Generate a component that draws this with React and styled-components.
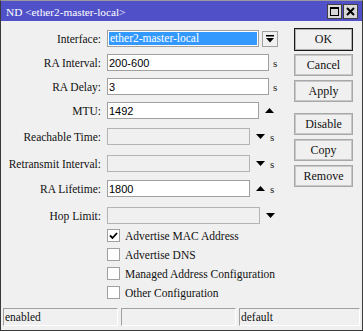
import React from 'react';
import styled, { createGlobalStyle } from 'styled-components';

const Global = createGlobalStyle`
  html, body { margin: 0; padding: 0; background: #f0f0f0; }
  body { font-family: "Liberation Serif", serif; }
`;

const Window = styled.div`
  box-sizing: border-box;
  width: 363px;
  height: 331px;
  display: flex;
  flex-direction: column;
  background: #f0f0f0;
  border: 1px solid #3a3a3a;
  border-top-color: #9a9a9a;
  overflow: hidden;
`;

const TitleBar = styled.div`
  height: 20px;
  flex: none;
  display: flex;
  align-items: center;
  background: #5050c8;
  color: #fff;
  padding-left: 5px;
  padding-right: 4px;
  font-size: 11.3px;
`;

const Title = styled.div`
  flex: 1;
  padding-top: 1px;
`;

const TitleButton = styled.div`
  box-sizing: border-box;
  width: 15px;
  height: 15px;
  margin-left: 1px;
  background: #d8d8d8;
  border: 1px solid #404040;
  display: flex;
  align-items: center;
  justify-content: center;
`;

const Content = styled.div`
  flex: 1;
  display: flex;
  padding-top: 7px;
`;

const Form = styled.div`
  flex: 1;
  display: flex;
  flex-direction: column;
`;

const Row = styled.div`
  display: flex;
  align-items: center;
  height: 17px;
  margin-top: ${p => p.$top}px;
`;

const Label = styled.div`
  width: 100px;
  text-align: right;
  font-size: 11.5px;
  color: #111;
  white-space: nowrap;
`;

const Field = styled.div`
  box-sizing: border-box;
  width: ${p => p.$w}px;
  height: 17px;
  margin-left: 6px;
  border: 1px solid ${p => (p.$off ? '#b4b4b4' : '#a0a0a0')};
  background: ${p => (p.$off ? '#f0f0f0' : '#fff')};
  display: flex;
  align-items: center;
  padding: 0 1px;
  font-family: "Liberation Sans", Arial, sans-serif;
  font-size: 11px;
  color: #000;
`;

const Selected = styled.span`
  display: block;
  width: 100%;
  height: 13px;
  line-height: 13px;
  background: #3399ff;
  color: #fff;
  font-family: "Liberation Serif", serif;
  font-size: 11.5px;
  padding-left: 1px;
`;

const DropButton = styled.div`
  box-sizing: border-box;
  width: 16px;
  height: 16px;
  margin-left: 3px;
  border: 1px solid #a0a0a0;
  background: #f0f0f0;
  display: flex;
  align-items: center;
  justify-content: center;
`;

const Arrow = styled.div`
  width: 9px;
  height: 9px;
  margin-left: 6px;
  display: flex;
  align-items: center;
  justify-content: center;
`;

const Unit = styled.span`
  margin-left: ${p => p.$gap}px;
  font-size: 11px;
  color: #222;
`;

const Checks = styled.div`
  display: flex;
  flex-direction: column;
  gap: 6px;
  margin-top: 5px;
  padding-left: 106px;
`;

const CheckRow = styled.label`
  display: flex;
  align-items: center;
  height: 13px;
  font-size: 11.5px;
  color: #111;
`;

const Box = styled.span`
  box-sizing: border-box;
  width: 13px;
  height: 13px;
  border: 1px solid #a0a0a0;
  background: #fff;
  margin-right: 5px;
  display: flex;
  align-items: center;
  justify-content: center;
`;

const Buttons = styled.div`
  width: 59px;
  margin-right: 9px;
  display: flex;
  flex-direction: column;
`;

const Button = styled.div`
  box-sizing: border-box;
  height: ${p => (p.$default ? 23 : 22)}px;
  margin-top: ${p => p.$top}px;
  border: 1px solid ${p => (p.$default ? '#1a1a1a' : '#a8a8a8')};
  box-shadow: inset 0 0 0 1px ${p => (p.$default ? '#b0b0b0' : '#c8c8c8')};
  background: #f0f0f0;
  display: flex;
  align-items: center;
  justify-content: center;
  font-size: 12px;
  color: #111;
`;

const StatusBar = styled.div`
  display: flex;
  gap: 3px;
  padding: 0 2px 4px 2px;
  height: 18px;
  flex: none;
`;

const Cell = styled.div`
  box-sizing: border-box;
  width: ${p => p.$w}px;
  flex: ${p => (p.$grow ? 1 : 'none')};
  height: 18px;
  border: 1px solid #fff;
  border-top-color: #a0a0a0;
  border-left-color: #a0a0a0;
  padding-left: 1px;
  display: flex;
  align-items: center;
  font-size: 11.5px;
  color: #111;
`;

const Up = () => (
  <svg width="9" height="5" viewBox="0 0 9 5"><path d="M0 5 L4.5 0 L9 5 Z" fill="#000" /></svg>
);
const Down = () => (
  <svg width="9" height="5" viewBox="0 0 9 5"><path d="M0 0 L9 0 L4.5 5 Z" fill="#000" /></svg>
);

const rows = [
  { label: 'RA Interval:', value: '200-600', w: 162, unit: true, top: 7 },
  { label: 'RA Delay:', value: '3', w: 162, unit: true, top: 7 },
  { label: 'MTU:', value: '1492', w: 152, arrow: 'up', top: 7 },
  { label: 'Reachable Time:', w: 143, off: true, arrow: 'down', unit: true, top: 9 },
  { label: 'Retransmit Interval:', w: 143, off: true, arrow: 'down', unit: true, top: 10 },
  { label: 'RA Lifetime:', value: '1800', w: 143, arrow: 'up', unit: true, top: 8 },
  { label: 'Hop Limit:', w: 153, off: true, arrow: 'down', top: 10 },
];

const checks = [
  { text: 'Advertise MAC Address', on: true },
  { text: 'Advertise DNS' },
  { text: 'Managed Address Configuration' },
  { text: 'Other Configuration' },
];

const buttons = [
  { text: 'OK', top: 0, def: true },
  { text: 'Cancel', top: 3 },
  { text: 'Apply', top: 4 },
  { text: 'Disable', top: 11 },
  { text: 'Copy', top: 4 },
  { text: 'Remove', top: 4 },
];

export default function App() {
  return (
    <Window>
      <Global />
      <TitleBar>
        <Title>ND &lt;ether2-master-local&gt;</Title>
        <TitleButton>
          <svg width="9" height="9" viewBox="0 0 9 9">
            <rect x="0.5" y="0.5" width="8" height="8" fill="none" stroke="#000" />
            <rect x="0" y="0" width="9" height="2" fill="#000" />
          </svg>
        </TitleButton>
        <TitleButton>
          <svg width="9" height="9" viewBox="0 0 9 9">
            <path d="M1 1 L8 8 M8 1 L1 8" stroke="#000" strokeWidth="2" />
          </svg>
        </TitleButton>
      </TitleBar>
      <Content>
        <Form>
          <Row $top={2}>
            <Label>Interface:</Label>
            <Field $w={152}>
              <Selected>ether2-master-local</Selected>
            </Field>
            <DropButton>
              <svg width="8" height="8" viewBox="0 0 8 8">
                <rect x="0" y="0" width="8" height="1.5" fill="#000" />
                <path d="M0 3 L8 3 L4 7.5 Z" fill="#000" />
              </svg>
            </DropButton>
          </Row>
          {rows.map(r => (
            <Row key={r.label} $top={r.top}>
              <Label>{r.label}</Label>
              <Field $w={r.w} $off={r.off}>{r.value}</Field>
              {r.arrow && <Arrow>{r.arrow === 'up' ? <Up /> : <Down />}</Arrow>}
              {r.unit && <Unit $gap={r.arrow ? 5 : 4}>s</Unit>}
            </Row>
          ))}
          <Checks>
            {checks.map(c => (
              <CheckRow key={c.text}>
                <Box>
                  {c.on && (
                    <svg width="9" height="9" viewBox="0 0 9 9">
                      <path d="M1 4.5 L3.5 7 L8 2" fill="none" stroke="#000" strokeWidth="1.8" />
                    </svg>
                  )}
                </Box>
                {c.text}
              </CheckRow>
            ))}
          </Checks>
        </Form>
        <Buttons>
          {buttons.map(b => (
            <Button key={b.text} $top={b.top} $default={b.def}>{b.text}</Button>
          ))}
        </Buttons>
      </Content>
      <StatusBar>
        <Cell $w={115}>enabled</Cell>
        <Cell $w={115}></Cell>
        <Cell $grow>default</Cell>
      </StatusBar>
    </Window>
  );
}
